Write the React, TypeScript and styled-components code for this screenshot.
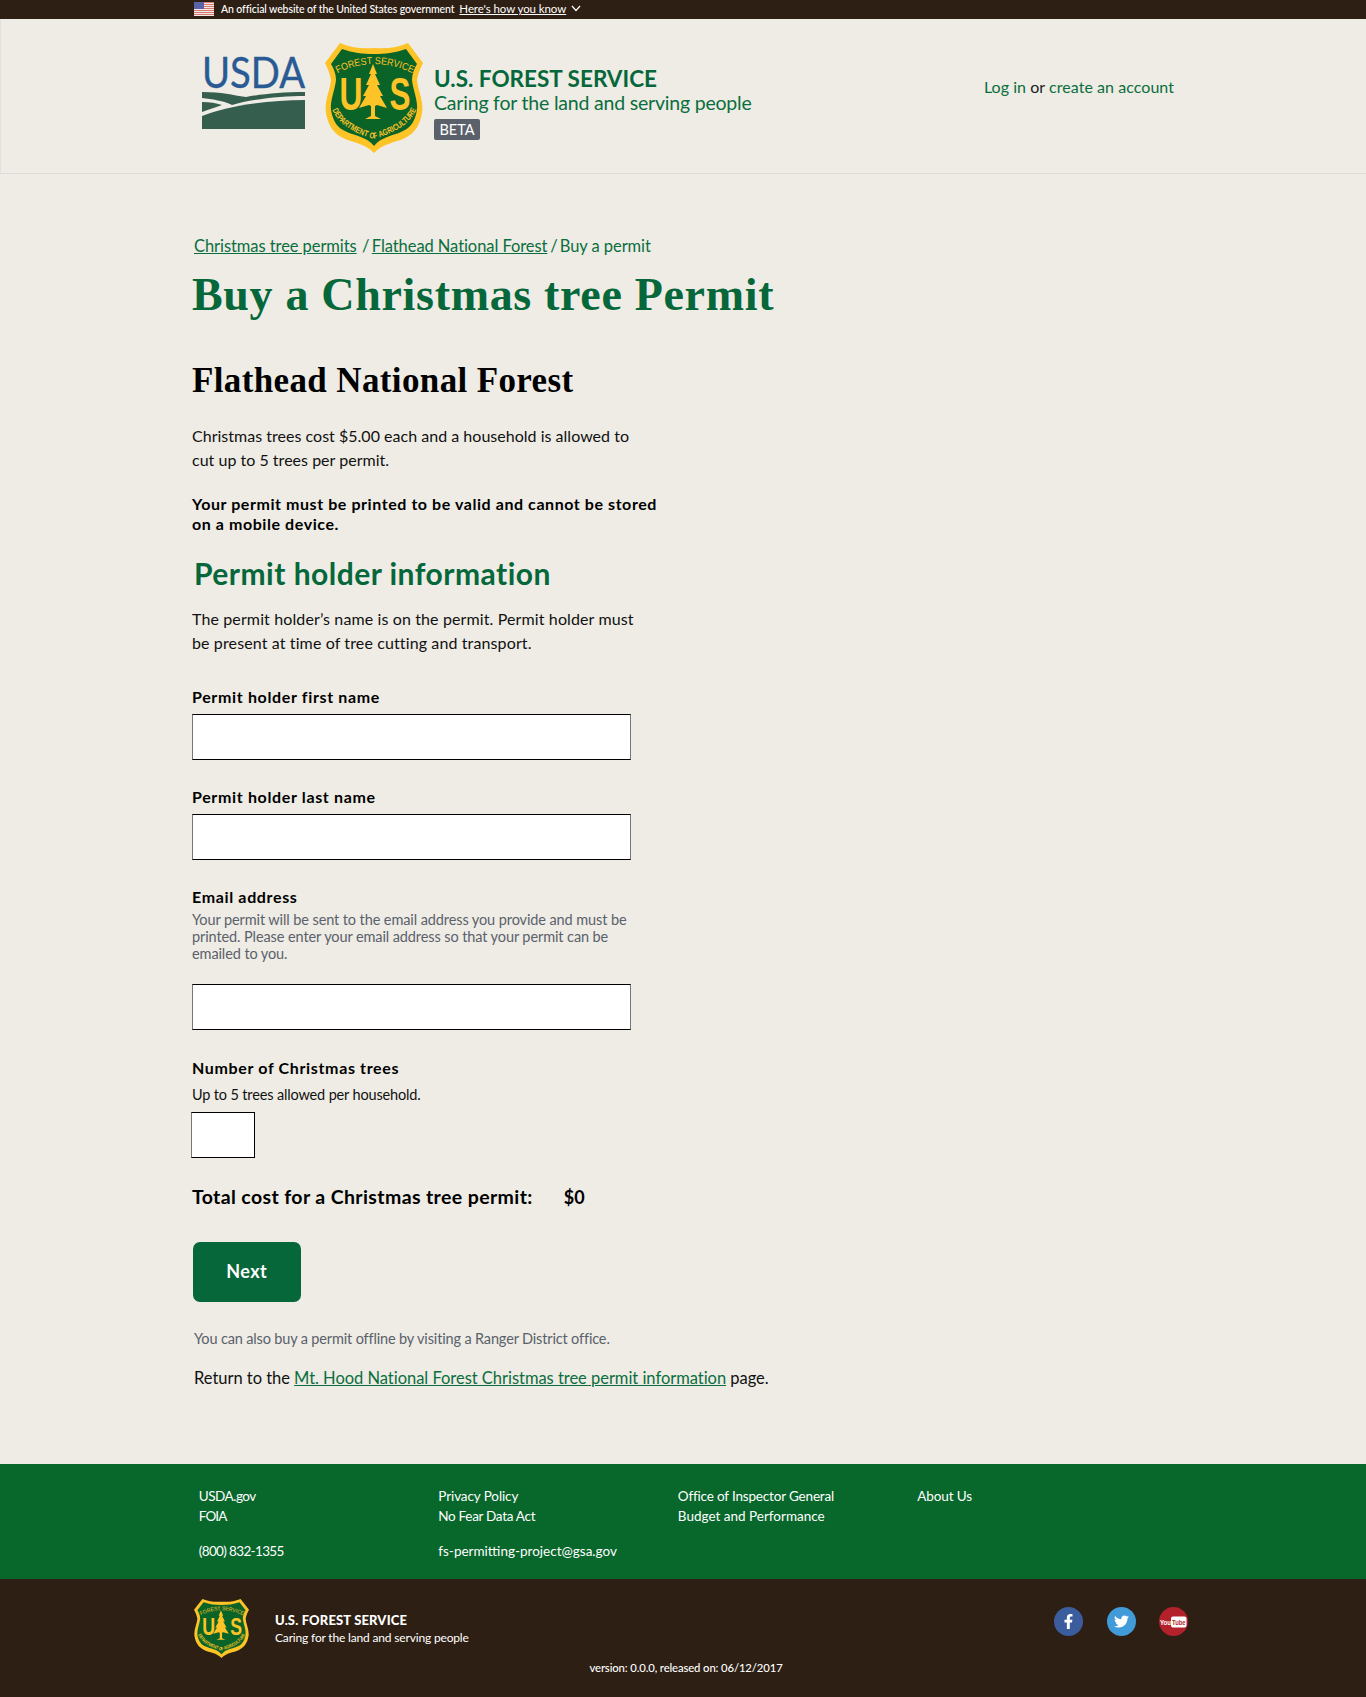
import React from "react";
import styled, { createGlobalStyle } from "styled-components";
import { FaFacebookF, FaTwitter } from "react-icons/fa";

const SANS = `"Lato", "Noto Sans", sans-serif`;
const SERIF = `"Liberation Serif", "DejaVu Serif", serif`;
const GREEN = "#05673a";
const LINK = "#0b6e3e";

const Global = createGlobalStyle`
  html, body { margin: 0; padding: 0; background: #eeece5; }
  body { font-family: ${SANS}; color: #000; }
  * { box-sizing: border-box; }
`;

const Page = styled.div`
  width: 1366px;
  height: 1697px;
  display: flex;
  flex-direction: column;
  background: #eeece5;
  overflow: hidden;
`;

const Banner = styled.div`
  height: 19px;
  background: #2e1f14;
  color: #fff;
  padding: 0 0 2px 194px;
  display: flex;
  align-items: center;
  font-size: 10.5px;
`;
const BannerText = styled.span`
  margin-left: 7px;
  font-weight: 500;
  letter-spacing: -0.1px;
`;
const BannerLink = styled.a`
  margin-left: 5px;
  font-size: 11.5px;
  text-decoration: underline;
  letter-spacing: -0.08px;
`;
const BannerChevron = styled.svg`
  margin-left: 5px;
  width: 10px;
  height: 7px;
`;

const Header = styled.header`
  height: 155px;
  border-bottom: 1px solid #dcdcdc;
  border-left: 1px solid #e2e2e2;
  padding: 24px 192px 0 201px;
  display: flex;
  align-items: flex-start;
`;
const UsdaWrap = styled.svg`
  width: 103px;
  height: 71px;
  margin-top: 15px;
  flex: none;
  overflow: visible;
`;
const ShieldWrap = styled.svg<{ $w: number; $h: number }>`
  width: ${(p) => p.$w}px;
  height: ${(p) => p.$h}px;
  flex: none;
  display: block;
`;
const HeaderShield = styled.div`
  margin-left: 20px;
  flex: none;
`;
const Brand = styled.div`
  margin: 23px 0 0 11px;
  display: flex;
  flex-direction: column;
  align-items: flex-start;
  flex: 1;
`;
const BrandName = styled.div`
  font-size: 22.5px;
  line-height: 25px;
  font-weight: 700;
  color: ${GREEN};
`;
const BrandTag = styled.div`
  font-size: 19.5px;
  line-height: 23px;
  color: ${LINK};
  letter-spacing: -0.2px;
`;
const Beta = styled.span`
  margin-top: 5px;
  height: 21px;
  width: 46px;
  display: flex;
  align-items: center;
  justify-content: center;
  background: #5b616b;
  border-radius: 2px;
  font-size: 14.5px;
  color: #fff;
`;
const Account = styled.div`
  margin-top: 32px;
  font-size: 16px;
  line-height: 24px;
  letter-spacing: 0.05px;
  color: #1b1b1b;
  a { color: ${LINK}; }
`;

const Main = styled.main`
  padding: 60px 0 0 192px;
  flex: 1;
`;
const Crumbs = styled.nav`
  padding-left: 2px;
  font-size: 16.5px;
  line-height: 24px;
  letter-spacing: -0.07px;
  color: ${LINK};
`;
const CrumbLink = styled.a`
  color: ${LINK};
  text-decoration: underline;
`;
const CrumbSep = styled.span`
  letter-spacing: -1.5px;
  margin-right: 1px;
`;
const Title = styled.h1`
  margin: 9px 0 0;
  font-family: ${SERIF};
  font-size: 46px;
  line-height: 56px;
  font-weight: 700;
  color: ${GREEN};
  letter-spacing: 0.68px;
`;
const Forest = styled.h2`
  margin: 36px 0 0;
  font-family: ${SERIF};
  font-size: 35px;
  line-height: 44px;
  font-weight: 700;
  color: #000;
  letter-spacing: 0.37px;
`;
const Body = styled.p<{ $top: number; $ls: number }>`
  margin: ${(p) => p.$top}px 0 0;
  width: 455px;
  font-size: 16px;
  line-height: 24px;
  letter-spacing: ${(p) => p.$ls}px;
  color: #111;
`;
const Strong = styled.p`
  margin: 22px 0 0;
  width: 475px;
  font-size: 16px;
  line-height: 20px;
  font-weight: 700;
  letter-spacing: 0.57px;
  color: #000;
`;
const Section = styled.h3`
  margin: 21px 0 0 2px;
  font-size: 30px;
  line-height: 36px;
  font-weight: 700;
  letter-spacing: 0.48px;
  color: ${GREEN};
`;
const Label = styled.label<{ $top: number }>`
  display: block;
  margin-top: ${(p) => p.$top}px;
  font-size: 16px;
  line-height: 20px;
  font-weight: 700;
  letter-spacing: 0.65px;
  color: #000;
`;
const TextInput = styled.input<{ $top?: number }>`
  display: block;
  margin-top: ${(p) => p.$top ?? 7}px;
  width: 439px;
  height: 46px;
  border: 1px solid #000;
  border-left-color: #777;
  border-right-color: #777;
  background: #fff;
  border-radius: 0;
`;
const Hint = styled.div`
  margin-top: 4px;
  width: 450px;
  font-size: 14.5px;
  line-height: 17px;
  color: #5b616b;
  letter-spacing: -0.1px;
`;
const SmallNote = styled.div`
  margin-top: 7px;
  font-size: 14.5px;
  line-height: 20px;
  letter-spacing: -0.15px;
  color: #111;
`;
const NumberInput = styled.input`
  display: block;
  margin: 7px 0 0 -1px;
  width: 64px;
  height: 46px;
  border: 1px solid #000;
  border-left-color: #777;
  background: #fff;
  border-radius: 0;
`;
const Total = styled.div`
  margin-top: 27px;
  display: flex;
  font-size: 19.5px;
  line-height: 24px;
  font-weight: 700;
  letter-spacing: 0.38px;
`;
const TotalAmount = styled.span`
  margin-left: 31px;
  font-size: 18px;
  letter-spacing: 0;
`;
const Next = styled.button`
  display: block;
  margin: 33px 0 0 0.5px;
  padding: 0 0 2px;
  width: 108.5px;
  height: 60px;
  background: ${GREEN};
  color: #fff;
  border: 0;
  border-radius: 7px;
  font-family: ${SANS};
  font-size: 18px;
  font-weight: 700;
  letter-spacing: 0.5px;
`;
const Offline = styled.div`
  margin: 27px 0 0 2px;
  font-size: 14.5px;
  line-height: 20px;
  letter-spacing: -0.15px;
  color: #5b616b;
`;
const Return = styled.div`
  margin: 17px 0 0 2px;
  font-size: 16.5px;
  line-height: 24px;
  letter-spacing: -0.03px;
  color: #111;
  a { color: ${LINK}; text-decoration: underline; }
`;

const GreenFooter = styled.div`
  height: 115px;
  background: #08672b;
  padding: 22px 0 0 198.8px;
  display: grid;
  grid-template-columns: repeat(4, 239.5px);
  color: #fff;
  font-size: 13.5px;
`;
const FootCol = styled.div`
  display: flex;
  flex-direction: column;
`;
const FootLine = styled.a<{ $gap?: boolean; $ls: number }>`
  line-height: 20px;
  letter-spacing: ${(p) => p.$ls}px;
  margin-top: ${(p) => (p.$gap ? "15px" : "0")};
`;

const BrownFooter = styled.footer`
  height: 118px;
  background: #2e1f14;
  color: #fff;
  padding: 20px 178px 0 194px;
  position: relative;
`;
const BrownTop = styled.div`
  display: flex;
  align-items: flex-start;
`;
const BrownBrand = styled.div`
  margin: 12px 0 0 26px;
  flex: 1;
`;
const BrownName = styled.div`
  font-size: 13px;
  line-height: 19px;
  font-weight: 900;
  letter-spacing: 0.15px;
`;
const BrownTag = styled.div`
  font-size: 12px;
  line-height: 16px;
  letter-spacing: -0.17px;
`;
const Socials = styled.div`
  margin-top: 8px;
  display: flex;
  gap: 23.5px;
`;
const Social = styled.a<{ $bg: string }>`
  width: 29px;
  height: 29px;
  border-radius: 50%;
  background: ${(p) => p.$bg};
  display: flex;
  align-items: center;
  justify-content: center;
  color: #fff;
  font-size: 15px;
`;
const YouTubeMark = styled.svg`
  width: 27px;
  height: 12px;
`;
const Version = styled.div`
  position: absolute;
  left: 0;
  right: 0;
  top: 80px;
  text-align: center;
  padding-left: 6px;
  font-size: 11.3px;
  line-height: 18px;
  font-weight: 500;
  letter-spacing: -0.12px;
`;

const Shield: React.FC<{ w: number; h: number; id: string }> = ({ w, h, id }) => (
  <ShieldWrap $w={w} $h={h} viewBox="0 0 98 110" preserveAspectRatio="none">
    <path
      fill="#fdc327"
      d="M15 0C27 5 38 6 49 5C60 6 71 5 83 0L98 20C95 26 93 31 92 37C93 48 99 58 97 70C95 82 90 90 80 95C70 100 58 100 49 110C40 100 28 100 18 95C8 90 3 82 1 70C-1 58 5 48 6 37C5 31 3 26 0 20Z"
    />
    <path
      fill="#0b6427"
      d="M17 6C28 10 38 11 49 11C60 11 70 10 81 6L92 21C89 26 87 31 87 37C88 47 93 57 92 67C90 78 86 85 76 89C67 93 56 94 49 103C42 94 31 93 22 89C12 85 8 78 6 67C5 57 10 47 11 37C11 31 9 26 6 21Z"
    />
    <defs>
      <path id={`${id}a`} d="M13 30Q49 12 87 30" />
      <path id={`${id}b`} d="M6 62C10 80 28 90 49 96C70 90 88 80 93 62" />
    </defs>
    <text fontFamily="Liberation Sans, sans-serif" fontSize="10" fill="#fdc327">
      <textPath href={`#${id}a`} startOffset="50%" textAnchor="middle" textLength="78" lengthAdjust="spacingAndGlyphs">
        FOREST SERVICE
      </textPath>
    </text>
    <text fontFamily="Liberation Sans, sans-serif" fontSize="8.5" fontWeight="700" fill="#fdc327">
      <textPath href={`#${id}b`} startOffset="50%" textAnchor="middle" textLength="106" lengthAdjust="spacingAndGlyphs">
        DEPARTMENT OF AGRICULTURE
      </textPath>
    </text>
    <text x="26" y="67" textAnchor="middle" fontFamily="Liberation Sans, sans-serif" fontWeight="700" fontSize="46" fill="#fdc327" textLength="23" lengthAdjust="spacingAndGlyphs">
      U
    </text>
    <text x="75" y="67" textAnchor="middle" fontFamily="Liberation Sans, sans-serif" fontWeight="700" fontSize="46" fill="#fdc327" textLength="21" lengthAdjust="spacingAndGlyphs">
      S
    </text>
    <path
      fill="#fdc327"
      d="M48 21L52 31L50 31L55 42L52 42L58 53L55 53L62 65L52 62L50 63L50 73L56 76L40 76L46 73L46 63L44 62L34 65L41 53L38 53L44 42L41 42L46 31L44 31Z"
    />
  </ShieldWrap>
);

const UsdaLogo = () => (
  <UsdaWrap viewBox="0 0 103 71">
    <text x="0" y="30" fontFamily="Lato, sans-serif" fontSize="43" fill="#2a5a94" stroke="#2a5a94" strokeWidth="0.4" textLength="103" lengthAdjust="spacingAndGlyphs">
      USDA
    </text>
    <path fill="#355e4e" d="M0 34C20 34 30 37 44 39C60 36 80 34 103 34V38C80 38 50 41 30 47C22 43 10 41 0 40Z" />
    <path fill="#355e4e" d="M0 44C8 44 14 45 20 47C14 49 6 52 0 54Z" />
    <path fill="#355e4e" d="M0 71V58C25 48 65 42 103 42V71Z" />
  </UsdaWrap>
);

const Flag = () => (
  <svg width="20" height="14" viewBox="0 0 20 14">
    <rect width="20" height="14" fill="#f4f4f4" />
    {[0, 2, 4, 6, 8, 10, 12].map((y) => (
      <rect key={y} y={y} width="20" height="1.1" fill="#d9776d" />
    ))}
    <rect width="10" height="7" fill="#5a62a8" />
  </svg>
);

export default function App() {
  return (
    <Page>
      <Global />
      <Banner>
        <Flag />
        <BannerText>An official website of the United States government</BannerText>
        <BannerLink>Here's how you know</BannerLink>
        <BannerChevron viewBox="0 0 10 7">
          <path d="M1 1L5 5.5L9 1" fill="none" stroke="#fff" strokeWidth="1.2" />
        </BannerChevron>
      </Banner>
      <Header>
        <UsdaLogo />
        <HeaderShield>
          <Shield w={98} h={110} id="hs" />
        </HeaderShield>
        <Brand>
          <BrandName>U.S. FOREST SERVICE</BrandName>
          <BrandTag>Caring for the land and serving people</BrandTag>
          <Beta>BETA</Beta>
        </Brand>
        <Account>
          <a>Log in</a> or <a>create an account</a>
        </Account>
      </Header>
      <Main>
        <Crumbs>
          <CrumbLink>Christmas tree permits</CrumbLink>
          <CrumbSep>&nbsp; / </CrumbSep>
          <CrumbLink>Flathead National Forest</CrumbLink>
          <CrumbSep> / </CrumbSep>Buy a permit
        </Crumbs>
        <Title>Buy a Christmas tree Permit</Title>
        <Forest>Flathead National Forest</Forest>
        <Body $top={21} $ls={0.02}>
          Christmas trees cost $5.00 each and a household is allowed to cut up to 5 trees per permit.
        </Body>
        <Strong>Your permit must be printed to be valid and cannot be stored on a mobile device.</Strong>
        <Section>Permit holder information</Section>
        <Body $top={16} $ls={0.12}>
          The permit holder’s name is on the permit. Permit holder must be present at time of tree cutting and transport.
        </Body>
        <Label $top={32}>Permit holder first name</Label>
        <TextInput />
        <Label $top={27}>Permit holder last name</Label>
        <TextInput />
        <Label $top={27}>Email address</Label>
        <Hint>
          Your permit will be sent to the email address you provide and must be printed. Please enter your email address so that your permit can be emailed to you.
        </Hint>
        <TextInput $top={22} />
        <Label $top={28}>Number of Christmas trees</Label>
        <SmallNote>Up to 5 trees allowed per household.</SmallNote>
        <NumberInput />
        <Total>
          Total cost for a Christmas tree permit:
          <TotalAmount>$0</TotalAmount>
        </Total>
        <Next>Next</Next>
        <Offline>You can also buy a permit offline by visiting a Ranger District office.</Offline>
        <Return>
          Return to the <a>Mt. Hood National Forest Christmas tree permit information</a> page.
        </Return>
      </Main>
      <GreenFooter>
        <FootCol>
          <FootLine $ls={-0.5}>USDA.gov</FootLine>
          <FootLine $ls={-0.9}>FOIA</FootLine>
          <FootLine $gap $ls={-0.65}>(800) 832-1355</FootLine>
        </FootCol>
        <FootCol>
          <FootLine $ls={-0.1}>Privacy Policy</FootLine>
          <FootLine $ls={-0.3}>No Fear Data Act</FootLine>
          <FootLine $gap $ls={0}>fs-permitting-project@gsa.gov</FootLine>
        </FootCol>
        <FootCol>
          <FootLine $ls={-0.17}>Office of Inspector General</FootLine>
          <FootLine $ls={0}>Budget and Performance</FootLine>
        </FootCol>
        <FootCol>
          <FootLine $ls={-0.1}>About Us</FootLine>
        </FootCol>
      </GreenFooter>
      <BrownFooter>
        <BrownTop>
          <Shield w={55} h={59} id="fs" />
          <BrownBrand>
            <BrownName>U.S. FOREST SERVICE</BrownName>
            <BrownTag>Caring for the land and serving people</BrownTag>
          </BrownBrand>
          <Socials>
            <Social $bg="#3b5d9e"><FaFacebookF /></Social>
            <Social $bg="#419bd8"><FaTwitter /></Social>
            <Social $bg="#b3222a">
              <YouTubeMark viewBox="0 0 27 12">
                <rect x="11" y="0.5" width="15.5" height="11" rx="2" fill="#fff" />
                <text x="0" y="9" fontFamily="Liberation Sans, sans-serif" fontSize="7" fontWeight="700" fill="#fff" textLength="11" lengthAdjust="spacingAndGlyphs">You</text>
                <text x="12" y="9" fontFamily="Liberation Sans, sans-serif" fontSize="7" fontWeight="700" fill="#b3222a" textLength="13.5" lengthAdjust="spacingAndGlyphs">Tube</text>
              </YouTubeMark>
            </Social>
          </Socials>
        </BrownTop>
        <Version>version: 0.0.0, released on: 06/12/2017</Version>
      </BrownFooter>
    </Page>
  );
}
